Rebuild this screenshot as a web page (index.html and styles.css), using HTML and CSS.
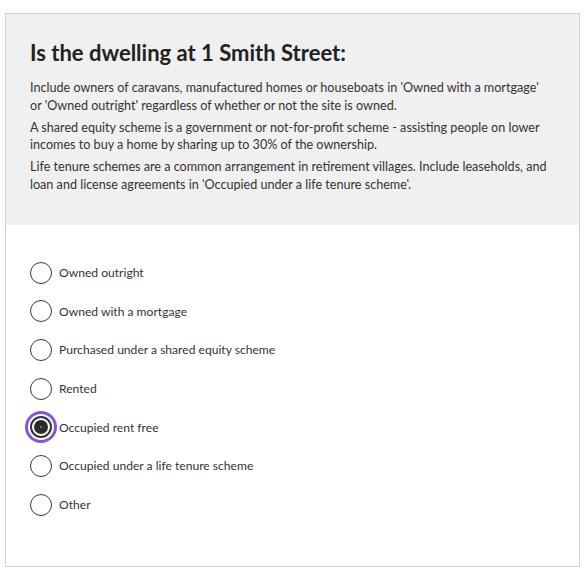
FILE: index.html
```html
<!DOCTYPE html>
<html lang="en">
<head>
<meta charset="utf-8">
<title>Dwelling question</title>
<link rel="stylesheet" href="styles.css">
</head>
<body>
<div class="card">
  <div class="header">
    <h1 class="title">Is the dwelling at 1 Smith Street:</h1>
    <p class="note">Include owners of caravans, manufactured homes or houseboats in 'Owned with a mortgage'<br>or 'Owned outright' regardless of whether or not the site is owned.</p>
    <p class="note">A shared equity scheme is a government or not-for-profit scheme - assisting people on lower<br>incomes to buy a home by sharing up to 30% of the ownership.</p>
    <p class="note">Life tenure schemes are a common arrangement in retirement villages. Include leaseholds, and<br>loan and license agreements in 'Occupied under a life tenure scheme'.</p>
  </div>
  <ul class="options">
    <li class="option"><span class="radio"></span><span class="label">Owned outright</span></li>
    <li class="option"><span class="radio"></span><span class="label">Owned with a mortgage</span></li>
    <li class="option"><span class="radio"></span><span class="label">Purchased under a shared equity scheme</span></li>
    <li class="option"><span class="radio"></span><span class="label">Rented</span></li>
    <li class="option"><span class="radio checked"><span class="dot"></span></span><span class="label">Occupied rent free</span></li>
    <li class="option"><span class="radio"></span><span class="label">Occupied under a life tenure scheme</span></li>
    <li class="option"><span class="radio"></span><span class="label">Other</span></li>
  </ul>
</div>
</body>
</html>
```
FILE: styles.css
```css
html, body {
  margin: 0;
  padding: 0;
  background: #ffffff;
}
body {
  font-family: Lato, "Noto Sans", "Liberation Sans", sans-serif;
  color: #333333;
}
.card {
  margin: 13px 6px 0 5px;
  border: 1px solid #d2d2d2;
  border-top-color: #cfcfcf;
  box-sizing: border-box;
  height: 554px;
}
.header {
  background: #f0f0f0;
  padding: 24px 16px 27px 24px;
  white-space: nowrap;
}
.title {
  margin: 0 0 11px 0;
  font-size: 22px;
  line-height: 30px;
  font-weight: 700;
  color: #222222;
}
.note {
  margin: 0 0 4.5px 0;
  font-size: 12.6px;
  line-height: 17.5px;
  color: #333333;
}
.options {
  list-style: none;
  margin: 0;
  padding: 37px 24px 0 24px;
  display: flex;
  flex-direction: column;
  gap: 16.7px;
}
.option {
  display: flex;
  align-items: center;
  height: 22px;
}
.radio {
  width: 22px;
  height: 22px;
  box-sizing: border-box;
  border: 1.5px solid #3a3a3a;
  border-radius: 50%;
  background: #ffffff;
  flex: none;
  display: flex;
  align-items: center;
  justify-content: center;
}
.radio.checked {
  border: 2px solid #333333;
  box-shadow: 0 0 0 2px #ffffff, 0 0 0 5px #8754d9;
}
.dot {
  width: 14px;
  height: 14px;
  border-radius: 50%;
  background: #2a2a2a;
  position: relative;
}
.dot::after {
  content: "";
  position: absolute;
  left: 6px;
  top: 6px;
  width: 2px;
  height: 2px;
  border-radius: 50%;
  background: #8a8a8a;
}
.label {
  margin-left: 7px;
  font-size: 12.1px;
  color: #333333;
}
```
